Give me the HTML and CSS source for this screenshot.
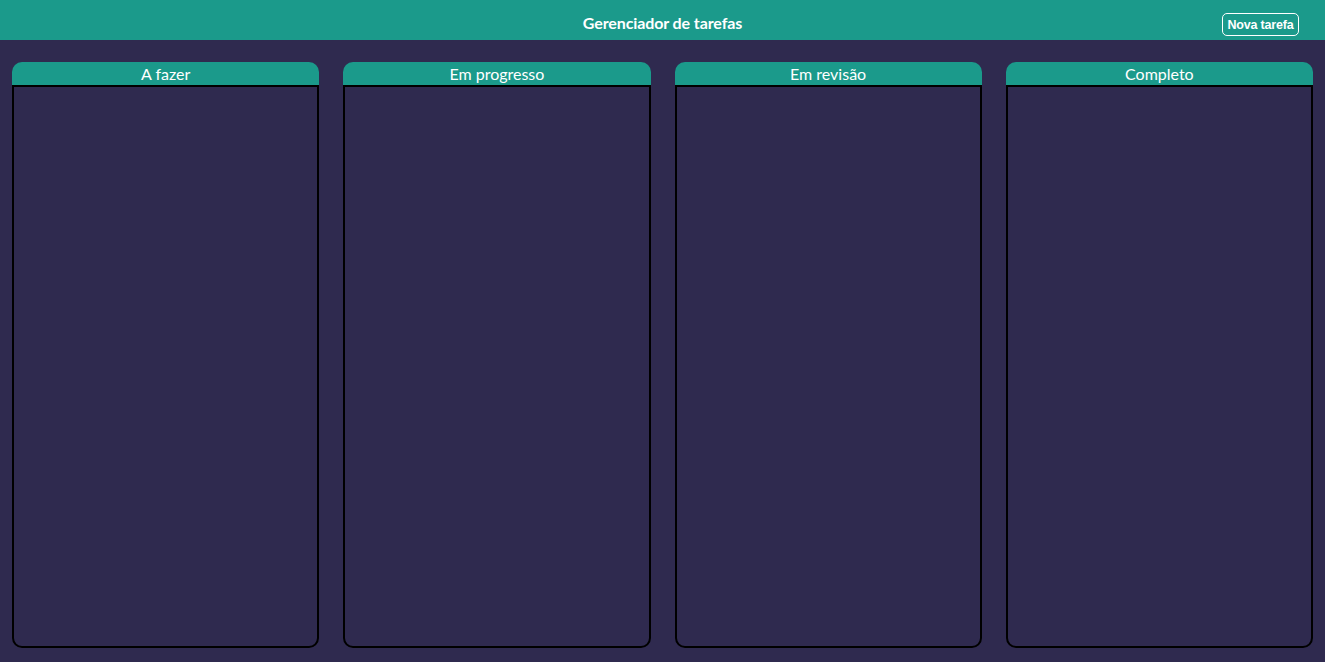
FILE: index.html
```html
<!DOCTYPE html>
<html lang="pt">
<head>
<meta charset="utf-8">
<title>Gerenciador de tarefas</title>
<link rel="stylesheet" href="styles.css">
</head>
<body>
<header class="topbar">
  <h1 class="title">Gerenciador de tarefas</h1>
  <button class="new-task">Nova tarefa</button>
</header>
<main class="board">
  <section class="column">
    <h2 class="column-title">A fazer</h2>
    <div class="column-body"></div>
  </section>
  <section class="column">
    <h2 class="column-title">Em progresso</h2>
    <div class="column-body"></div>
  </section>
  <section class="column">
    <h2 class="column-title">Em revisão</h2>
    <div class="column-body"></div>
  </section>
  <section class="column">
    <h2 class="column-title">Completo</h2>
    <div class="column-body"></div>
  </section>
</main>
</body>
</html>
```
FILE: styles.css
```css
* { box-sizing: border-box; }
html, body {
  margin: 0;
  padding: 0;
  height: 100%;
}
body {
  background: #2f2a4f;
  font-family: Lato, "Noto Sans", sans-serif;
  color: #ffffff;
  overflow: hidden;
}
.topbar {
  position: relative;
  height: 40px;
  padding-top: 4px;
  background: #1b9a8b;
  display: flex;
  align-items: center;
  justify-content: center;
}
.title {
  margin: 0;
  font-size: 16px;
  font-weight: 700;
  letter-spacing: -0.1px;
}
.new-task {
  position: absolute;
  right: 26px;
  top: 13px;
  width: 77px;
  height: 23px;
  padding: 0;
  background: transparent;
  color: #ffffff;
  border: 1px solid #ffffff;
  border-radius: 5px;
  font-family: "Liberation Sans", Arial, sans-serif;
  font-size: 12.5px;
  font-weight: 700;
  letter-spacing: -0.2px;
  cursor: pointer;
}
.board {
  display: grid;
  grid-template-columns: repeat(4, 1fr);
  column-gap: 24px;
  padding: 22px 12px 0 12px;
}
.column {
  display: flex;
  flex-direction: column;
}
.column-title {
  margin: 0;
  height: 23px;
  background: #1b9a8b;
  border-radius: 10px 10px 0 0;
  font-size: 16px;
  font-weight: 400;
  text-align: center;
  line-height: 24px;
}
.column-body {
  height: 563px;
  border: 2px solid #000000;
  border-radius: 0 0 10px 10px;
  background: #2f2a4f;
}
```
